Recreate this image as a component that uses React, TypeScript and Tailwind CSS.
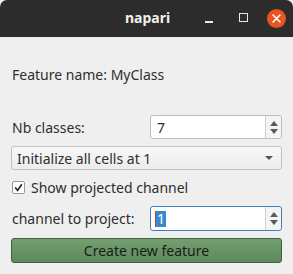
import React from "react";

function SpinArrows() {
  return (
    <div className="flex flex-col items-center justify-center w-[16px] border-l border-[#cfcfcf] bg-[#f4f4f4] gap-[3px] rounded-r-[3px]">
      <svg width="8" height="5" viewBox="0 0 8 5"><path d="M0 5 L4 0 L8 5 Z" fill="#5a5a5a" /></svg>
      <svg width="8" height="5" viewBox="0 0 8 5"><path d="M0 0 L4 5 L8 0 Z" fill="#5a5a5a" /></svg>
    </div>
  );
}

export default function App() {
  return (
    <div
      className="w-[293px] h-[274px] bg-[#efefef] flex flex-col text-[#2e2e2e] overflow-hidden"
      style={{ fontFamily: '"Noto Sans", "Open Sans", sans-serif' }}
    >
      <div className="h-[37px] bg-[#2c2c2c] rounded-t-[7px] flex items-center relative shrink-0">
        <div className="absolute left-[125px] top-[8px] text-[14px] font-bold text-[#f0f0f0] leading-[20px]">napari</div>
        <div className="absolute left-[205px] top-[21px] w-[8px] h-[2px] bg-[#e8e8e8]" />
        <div className="absolute left-[239px] top-[13px] w-[9px] h-[9px] border-[1.5px] border-[#e8e8e8]" />
        <div className="absolute left-[267px] top-[9px] w-[19px] h-[19px] rounded-full bg-[#e95420] flex items-center justify-center">
          <svg width="9" height="9" viewBox="0 0 9 9">
            <path d="M1 1 L8 8 M8 1 L1 8" stroke="#fff" strokeWidth="1.6" strokeLinecap="round" />
          </svg>
        </div>
      </div>

      <div className="flex flex-col px-[11px] text-[14px] leading-[19px]">
        <div className="pl-[1px] mt-[28px] h-[19px]">Feature name: MyClass</div>

        <div className="flex items-center justify-between mt-[31px] h-[24px]">
          <span className="pl-[1px]">Nb classes:</span>
          <div className="w-[132px] h-[24px] bg-white border border-[#bdbdbd] rounded-[3px] flex">
            <div className="flex-1 pl-[6px] flex items-center">7</div>
            <SpinArrows />
          </div>
        </div>

        <div className="mt-[7px] h-[24px] border border-[#c2c2c2] rounded-[3px] bg-gradient-to-b from-[#f8f8f8] to-[#ececec] flex items-center justify-between pl-[5px] pr-[8px]">
          <span>Initialize all cells at 1</span>
          <svg width="8" height="5" viewBox="0 0 8 5"><path d="M0 0 L4 4 L8 0 Z" fill="#555" /></svg>
        </div>

        <div className="flex items-center mt-[11px] h-[13px]">
          <div className="w-[13px] h-[13px] bg-white border border-[#9a9a9a] rounded-[2px] flex items-center justify-center ml-[1px]">
            <svg width="9" height="9" viewBox="0 0 9 9"><path d="M1.2 4.6 L3.6 7.4 L7.8 1.2" stroke="#222" strokeWidth="1.6" fill="none" /></svg>
          </div>
          <span className="ml-[6px]">Show projected channel</span>
        </div>

        <div className="flex items-center justify-between mt-[12px] h-[25px]">
          <span className="pl-[1px]">channel to project:</span>
          <div className="w-[132px] h-[25px] bg-white border border-[#3f7fc0] rounded-[3px] flex">
            <div className="flex-1 pl-[4px] flex items-center">
              <span className="w-[1px] h-[16px] bg-[#c3421b]" />
              <span className="bg-[#3a87d6] text-white px-[1px] leading-[16px]">1</span>
            </div>
            <SpinArrows />
          </div>
        </div>

        <div className="mt-[7px] h-[25px] rounded-[3px] border border-[#3f5f3d] bg-gradient-to-b from-[#74a071] to-[#5d8a5a] flex items-center justify-center text-[#1b1b1b]">
          Create new feature
        </div>
      </div>
    </div>
  );
}
